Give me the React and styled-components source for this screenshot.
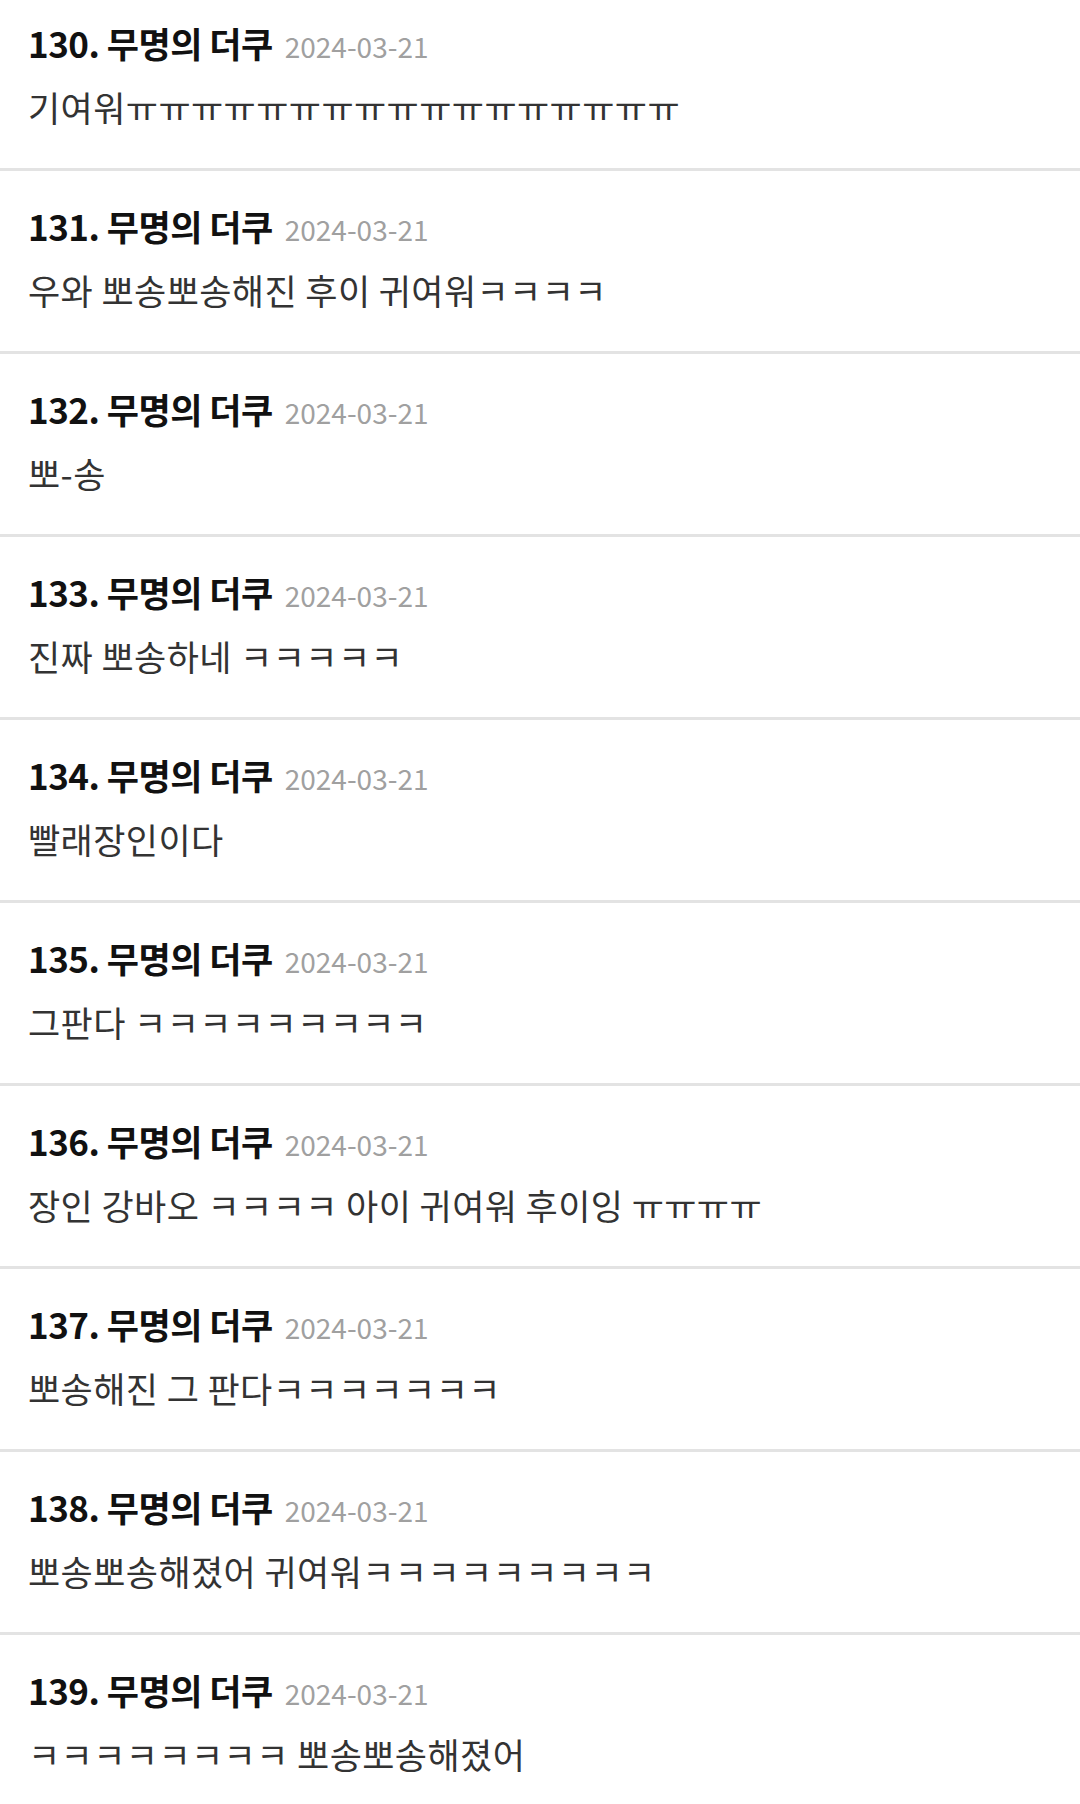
import React from 'react';
import styled, { createGlobalStyle } from 'styled-components';

const GlobalStyle = createGlobalStyle`
  html, body {
    margin: 0;
    padding: 0;
    background: #ffffff;
  }
  body {
    font-family: "Noto Sans CJK KR", "Noto Sans", sans-serif;
    -webkit-font-smoothing: antialiased;
  }
`;

const StyledList = styled.ul`
  list-style: none;
  margin: -12px 0 0;
  padding: 0;
  width: 1080px;
`;

const StyledItem = styled.li`
  padding: 33px 28px 39px;
  border-bottom: 3px solid #e3e3e3;
`;

const StyledHead = styled.div`
  display: flex;
  align-items: baseline;
  gap: 12px;
  height: 44px;
  line-height: 44px;
`;

const StyledName = styled.span`
  font-size: 35px;
  font-weight: 700;
  color: #111111;
  letter-spacing: -0.5px;
`;

const StyledDate = styled.span`
  font-size: 28px;
  font-weight: 400;
  color: #a0a0a0;
`;

const StyledBody = styled.p`
  margin: 20px 0 0;
  height: 44px;
  line-height: 44px;
  font-size: 35px;
  font-weight: 400;
  letter-spacing: 0.4px;
  color: #333333;
  white-space: nowrap;
`;

const comments = [
  { no: 130, text: '기여워ㅠㅠㅠㅠㅠㅠㅠㅠㅠㅠㅠㅠㅠㅠㅠㅠㅠ' },
  { no: 131, text: '우와 뽀송뽀송해진 후이 귀여워ㅋㅋㅋㅋ' },
  { no: 132, text: '뽀-송' },
  { no: 133, text: '진짜 뽀송하네 ㅋㅋㅋㅋㅋ' },
  { no: 134, text: '빨래장인이다' },
  { no: 135, text: '그판다 ㅋㅋㅋㅋㅋㅋㅋㅋㅋ' },
  { no: 136, text: '장인 강바오 ㅋㅋㅋㅋ 아이 귀여워 후이잉 ㅠㅠㅠㅠ' },
  { no: 137, text: '뽀송해진 그 판다ㅋㅋㅋㅋㅋㅋㅋ' },
  { no: 138, text: '뽀송뽀송해졌어 귀여워ㅋㅋㅋㅋㅋㅋㅋㅋㅋ' },
  { no: 139, text: 'ㅋㅋㅋㅋㅋㅋㅋㅋ 뽀송뽀송해졌어' },
];

const Comment = ({ no, text }) => (
  <StyledItem>
    <StyledHead>
      <StyledName>{no}. 무명의 더쿠</StyledName>
      <StyledDate>2024-03-21</StyledDate>
    </StyledHead>
    <StyledBody>{text}</StyledBody>
  </StyledItem>
);

const App = () => (
  <>
    <GlobalStyle />
    <StyledList>
      {comments.map(c => (
        <Comment key={c.no} {...c} />
      ))}
    </StyledList>
  </>
);

export default App;
